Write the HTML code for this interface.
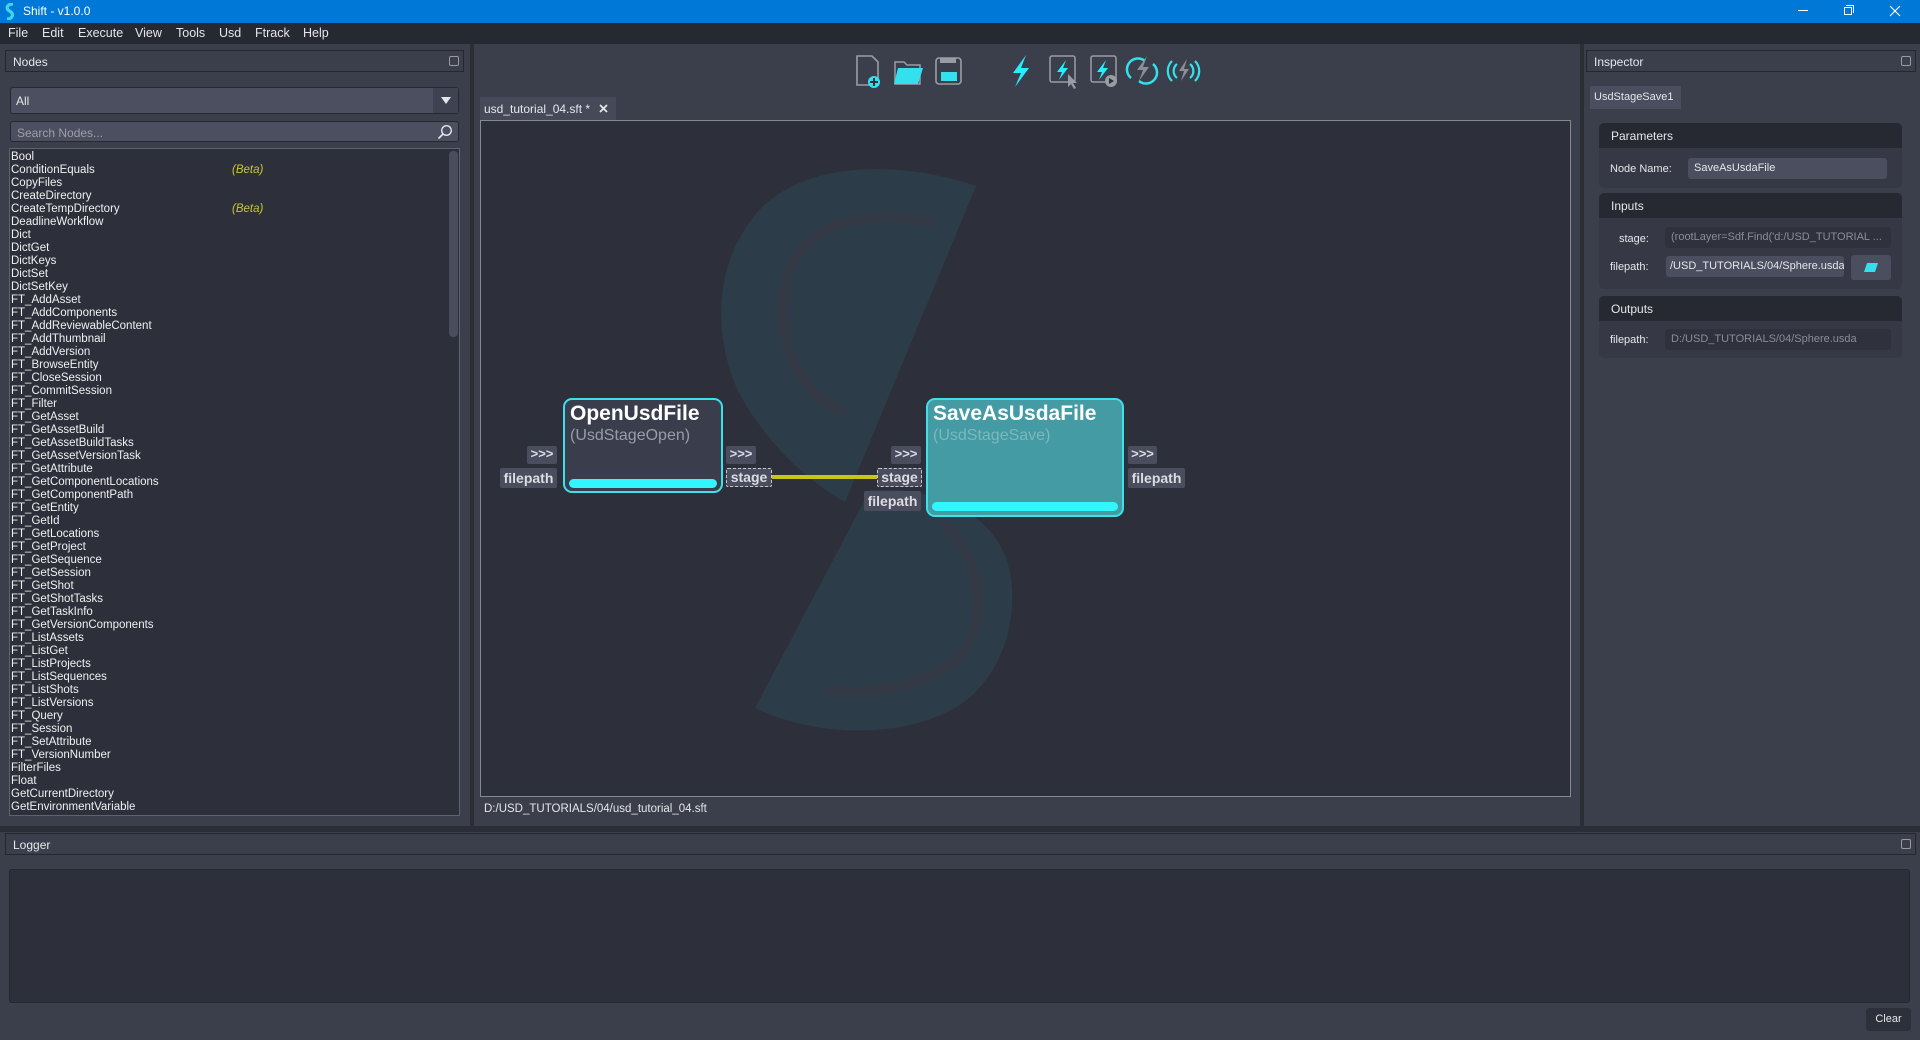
<!DOCTYPE html>
<html><head><meta charset="utf-8"><style>
*{box-sizing:border-box;margin:0;padding:0}
body{width:1920px;height:1040px;overflow:hidden;background:#3b3f4c;font-family:"Liberation Sans",sans-serif;color:#e6e6ea;position:relative;font-size:12px}
.a{position:absolute}
.title{left:0;top:0;width:1920px;height:23px;background:#0078d7;color:#fff;font-size:12px}
.menu{left:0;top:23px;width:1920px;height:21px;background:#262931;font-size:12.5px}
.menu span{position:absolute;top:3px}
.hdr{background:#3b3f4c;border:1px solid #24272e;font-size:12px;padding:4px 0 0 7px}
.float{position:absolute;right:4px;top:5px;width:10px;height:10px;border:1px solid #9a9ca5;border-radius:2px}
.list div{height:13px;line-height:13px;padding-left:1px;white-space:nowrap;position:relative}
.beta{position:absolute;left:222px;color:#c9c92e;font-style:italic}
.port{position:absolute;background:#4a4d5e;color:#dcdce2;font-weight:bold;font-size:14px;text-align:center;line-height:20px;border-radius:2px}
.dash{border:1.5px dashed #c8c8cc;background:#4a4d5e}
.grp{position:absolute;left:1599px;width:303px;background:#363945;border-radius:5px;overflow:hidden}
.grp .gh{background:#262931;height:25px;padding:6px 0 0 12px;font-size:12px}
.fld{position:absolute;height:21px;border-radius:3px;font-size:11px;line-height:21px;padding-left:6px;white-space:nowrap;overflow:hidden}
.lbl{position:absolute;font-size:11px}
</style></head><body>
<div class="a title">
<svg class="a" style="left:5px;top:3px" width="10" height="17" viewBox="0 0 10 17"><path d="M8 1 C3 1 1 4 3 7 L6 9 C9 12 7 16 2 16" stroke="#3fd6e8" stroke-width="3.2" fill="none"/></svg>
<span class="a" style="left:23px;top:4px">Shift - v1.0.0</span>
<span class="a" style="left:1798px;top:10px;width:10px;height:1px;background:#fff"></span>
<span class="a" style="left:1844px;top:7px;width:8px;height:8px;border:1px solid #fff"></span>
<span class="a" style="left:1846px;top:5px;width:8px;height:8px;border-top:1px solid #fff;border-right:1px solid #fff"></span>
<svg class="a" style="left:1889px;top:5px" width="12" height="12"><path d="M1 1L11 11M11 1L1 11" stroke="#fff" stroke-width="1.2"/></svg>
</div>
<div class="a menu"><span style="left:8px">File</span><span style="left:42px">Edit</span><span style="left:78px">Execute</span><span style="left:135px">View</span><span style="left:176px">Tools</span><span style="left:219px">Usd</span><span style="left:255px">Ftrack</span><span style="left:303px">Help</span></div>

<div class="a" style="left:470px;top:44px;width:4px;height:786px;background:#2b2e37"></div>
<div class="a" style="left:1580px;top:44px;width:4px;height:786px;background:#2b2e37"></div>
<div class="a" style="left:0;top:826px;width:1920px;height:6px;background:#2b2e37"></div>

<div class="a hdr" style="left:5px;top:50px;width:459px;height:22px">Nodes<span class="float"></span></div>
<div class="a" style="left:10px;top:87px;width:449px;height:27px;background:#4b4f60;border:1px solid #262931;border-radius:3px;font-size:12px;padding:6px 0 0 5px">All
<div class="a" style="right:0;top:0;width:25px;height:25px;background:#3f4351"></div>
<svg class="a" style="right:7px;top:9px" width="10" height="8"><path d="M0 0H10L5 7Z" fill="#e6e6ea"/></svg></div>
<div class="a" style="left:10px;top:121px;width:449px;height:21px;background:#4b4f60;border:1px solid #262931;border-radius:3px;font-size:12px;padding:4px 0 0 6px;color:#9d9fa8">Search Nodes...
<svg class="a" style="right:5px;top:2px" width="16" height="16"><circle cx="9.5" cy="6.5" r="4.8" stroke="#e6e6ea" stroke-width="1.4" fill="none"/><path d="M6 10L1.5 14.5" stroke="#e6e6ea" stroke-width="1.6"/></svg></div>
<div class="a list" style="left:9px;top:148px;width:451px;height:668px;background:#2d303a;border:1px solid #60636d;padding-top:2px;font-size:11.5px;color:#f0f0f2;overflow:hidden">
<div>Bool</div><div>ConditionEquals<span class="beta">(Beta)</span></div><div>CopyFiles</div><div>CreateDirectory</div><div>CreateTempDirectory<span class="beta">(Beta)</span></div><div>DeadlineWorkflow</div><div>Dict</div><div>DictGet</div><div>DictKeys</div><div>DictSet</div><div>DictSetKey</div><div>FT_AddAsset</div><div>FT_AddComponents</div><div>FT_AddReviewableContent</div><div>FT_AddThumbnail</div><div>FT_AddVersion</div><div>FT_BrowseEntity</div><div>FT_CloseSession</div><div>FT_CommitSession</div><div>FT_Filter</div><div>FT_GetAsset</div><div>FT_GetAssetBuild</div><div>FT_GetAssetBuildTasks</div><div>FT_GetAssetVersionTask</div><div>FT_GetAttribute</div><div>FT_GetComponentLocations</div><div>FT_GetComponentPath</div><div>FT_GetEntity</div><div>FT_GetId</div><div>FT_GetLocations</div><div>FT_GetProject</div><div>FT_GetSequence</div><div>FT_GetSession</div><div>FT_GetShot</div><div>FT_GetShotTasks</div><div>FT_GetTaskInfo</div><div>FT_GetVersionComponents</div><div>FT_ListAssets</div><div>FT_ListGet</div><div>FT_ListProjects</div><div>FT_ListSequences</div><div>FT_ListShots</div><div>FT_ListVersions</div><div>FT_Query</div><div>FT_Session</div><div>FT_SetAttribute</div><div>FT_VersionNumber</div><div>FilterFiles</div><div>Float</div><div>GetCurrentDirectory</div><div>GetEnvironmentVariable</div>
<span class="a" style="left:439px;top:2px;width:9px;height:186px;background:#4a4e5c;border-radius:4px"></span>
</div>

<svg class="a" style="left:850px;top:52px" width="360" height="40" viewBox="850 52 360 40">
<path d="M857 56h15l6 6v23h-21z" fill="none" stroke="#9a9ca5" stroke-width="1.6"/><circle cx="874" cy="82" r="6" fill="#35e0ee"/><path d="M874 78v8M870 82h8" stroke="#2d303a" stroke-width="2"/>
<path d="M895 62h9l3 3h13v19h-25z" fill="none" stroke="#9a9ca5" stroke-width="1.5"/><path d="M898 68h25l-5 16h-24z" fill="#35e0ee"/>
<rect x="936" y="58" width="25" height="26" rx="3" fill="none" stroke="#9a9ca5" stroke-width="1.6"/><rect x="940" y="58" width="16" height="5" fill="#9a9ca5"/><rect x="941" y="72" width="16" height="9" fill="#35e0ee"/>
<path d="M1026 55l-13 18h8l-6 14 14-19h-8z" fill="#20f0ff"/>
<rect x="1050" y="56" width="25" height="26" rx="2" fill="none" stroke="#9a9ca5" stroke-width="1.5"/><path d="M1066 60l-9 12h5l-3 8 9-12h-5z" fill="#20f0ff"/><path d="M1068 74v13l3-3 3 5 2-1-3-5h4z" fill="#9a9ca5"/>
<rect x="1091" y="56" width="25" height="26" rx="2" fill="none" stroke="#9a9ca5" stroke-width="1.5"/><path d="M1106 60l-9 12h5l-3 8 9-12h-5z" fill="#20f0ff"/><circle cx="1111" cy="81" r="6" fill="#9a9ca5"/><path d="M1109 78v6l5-3z" fill="#2d303a"/>
<path d="M1131 78a11 11 0 0 1 14-17M1153 64a11 11 0 0 1-14 17" stroke="#35e0ee" stroke-width="2.5" fill="none"/><path d="M1147 56l-10 14h6l-4 11 10-14h-6z" fill="#8c8e96"/>
<path d="M1172 61a14 14 0 0 0 0 20M1177 64a9 9 0 0 0 0 14M1195 61a14 14 0 0 1 0 20M1190 64a9 9 0 0 1 0 14" stroke="#35e0ee" stroke-width="2.2" fill="none"/><path d="M1187 59l-8 12h5l-3 10 8-12h-5z" fill="#8c8e96"/>
</svg>

<div class="a" style="left:480px;top:97px;width:136px;height:23px;background:#464a58;font-size:12px;padding:5px 0 0 4px">usd_tutorial_04.sft *<svg class="a" style="left:119px;top:7px" width="9" height="9"><path d="M1 1L8 8M8 1L1 8" stroke="#e6e6ea" stroke-width="1.8"/></svg></div>
<div class="a" style="left:480px;top:120px;width:1091px;height:677px;background:#2d303a;border:1px solid #868891;overflow:hidden">
<svg class="a" style="left:-481px;top:-121px" width="1920" height="1040">
<path d="M976 186 C900 160 800 160 755 215 C710 270 715 345 740 395 C765 440 805 480 845 502 Z" fill="#2c3c48"/>
<path d="M930 222 C860 210 805 222 788 275 C772 330 795 390 840 410" stroke="#343a45" stroke-width="10" fill="none" stroke-linecap="round"/>
<path d="M870 490 L755 708 C810 735 900 742 960 705 C1010 670 1022 600 1005 555 C985 510 940 495 900 490 Z" fill="#2c3c48"/>
<path d="M945 525 C985 565 990 630 955 660 C920 688 870 695 830 690" stroke="#343a45" stroke-width="10" fill="none" stroke-linecap="round"/>
<line x1="771" y1="477" x2="878" y2="477" stroke="#c5c51a" stroke-width="4"/>
</svg>
</div>
<div class="a" style="left:484px;top:803px;font-size:11.5px">D:/USD_TUTORIALS/04/usd_tutorial_04.sft</div>

<div class="a" style="left:563px;top:398px;width:160px;height:95px;background:#3a3e4c;border:2px solid #3ee0ec;border-radius:9px">
<div class="a" style="left:5px;top:2px;font-size:21px;font-weight:bold;color:#fff">OpenUsdFile</div>
<div class="a" style="left:5px;top:27px;font-size:16px;color:#9a9ca5">(UsdStageOpen)</div>
<div class="a" style="left:4px;top:79px;width:148px;height:9px;background:#33f5ff;border-radius:5px"></div></div>
<div class="port" style="left:527px;top:446px;width:30px;height:18px;line-height:16px;font-size:13px">&gt;&gt;&gt;</div>
<div class="port" style="left:500px;top:468px;width:57px">filepath</div>
<div class="port" style="left:726px;top:446px;width:30px;height:18px;line-height:16px;font-size:13px">&gt;&gt;&gt;</div>
<div class="port dash" style="left:726px;top:468px;width:46px;line-height:17px">stage</div>

<div class="a" style="left:926px;top:398px;width:198px;height:119px;background:#459ba3;border:2px solid #3ee0ec;border-radius:9px">
<div class="a" style="left:5px;top:2px;font-size:21px;font-weight:bold;color:#fff">SaveAsUsdaFile</div>
<div class="a" style="left:5px;top:27px;font-size:16px;color:#7bb8bd">(UsdStageSave)</div>
<div class="a" style="left:4px;top:102px;width:186px;height:9px;background:#33f5ff;border-radius:5px"></div></div>
<div class="port" style="left:891px;top:446px;width:30px;height:18px;line-height:16px;font-size:13px">&gt;&gt;&gt;</div>
<div class="port dash" style="left:877px;top:468px;width:45px;line-height:17px">stage</div>
<div class="port" style="left:864px;top:491px;width:57px">filepath</div>
<div class="port" style="left:1128px;top:446px;width:29px;height:18px;line-height:16px;font-size:13px">&gt;&gt;&gt;</div>
<div class="port" style="left:1128px;top:468px;width:57px">filepath</div>

<div class="a hdr" style="left:1586px;top:50px;width:330px;height:22px">Inspector<span class="float"></span></div>
<div class="a" style="left:1590px;top:86px;width:91px;height:23px;background:#4a4e5e;font-size:11px;padding:5px 0 0 4px">UsdStageSave1</div>
<div class="grp" style="top:123px;height:65px"><div class="gh">Parameters</div></div>
<div class="lbl" style="left:1610px;top:163px">Node Name:</div>
<div class="fld" style="left:1688px;top:158px;width:199px;background:#4a4e5e">SaveAsUsdaFile</div>
<div class="grp" style="top:193px;height:96px"><div class="gh">Inputs</div></div>
<div class="lbl" style="left:1619px;top:233px">stage:</div>
<div class="fld" style="left:1665px;top:227px;width:226px;background:#2f323c;color:#8a8c95">(rootLayer=Sdf.Find('d:/USD_TUTORIAL ...</div>
<div class="lbl" style="left:1610px;top:261px">filepath:</div>
<div class="fld" style="left:1666px;top:256px;width:178px;background:#4a4e5e;padding-left:4px">/USD_TUTORIALS/04/Sphere.usda</div>
<div class="a" style="left:1851px;top:255px;width:40px;height:25px;background:#4a4e5e;border-radius:3px"><svg class="a" style="left:13px;top:8px" width="14" height="9"><path d="M3 0h11l-3 9H0z" fill="#35e0ee"/></svg></div>
<div class="grp" style="top:296px;height:62px"><div class="gh">Outputs</div></div>
<div class="lbl" style="left:1610px;top:334px">filepath:</div>
<div class="fld" style="left:1665px;top:329px;width:226px;background:#2f323c;color:#8a8c95">D:/USD_TUTORIALS/04/Sphere.usda</div>

<div class="a hdr" style="left:5px;top:833px;width:1911px;height:22px">Logger<span class="float"></span></div>
<div class="a" style="left:9px;top:869px;width:1901px;height:134px;background:#2d303a;border:1px solid #24272e;border-radius:3px"></div>
<div class="a" style="left:1866px;top:1008px;width:45px;height:23px;background:#2d303a;border-radius:3px;font-size:11px;text-align:center;line-height:23px">Clear</div>
</body></html>
